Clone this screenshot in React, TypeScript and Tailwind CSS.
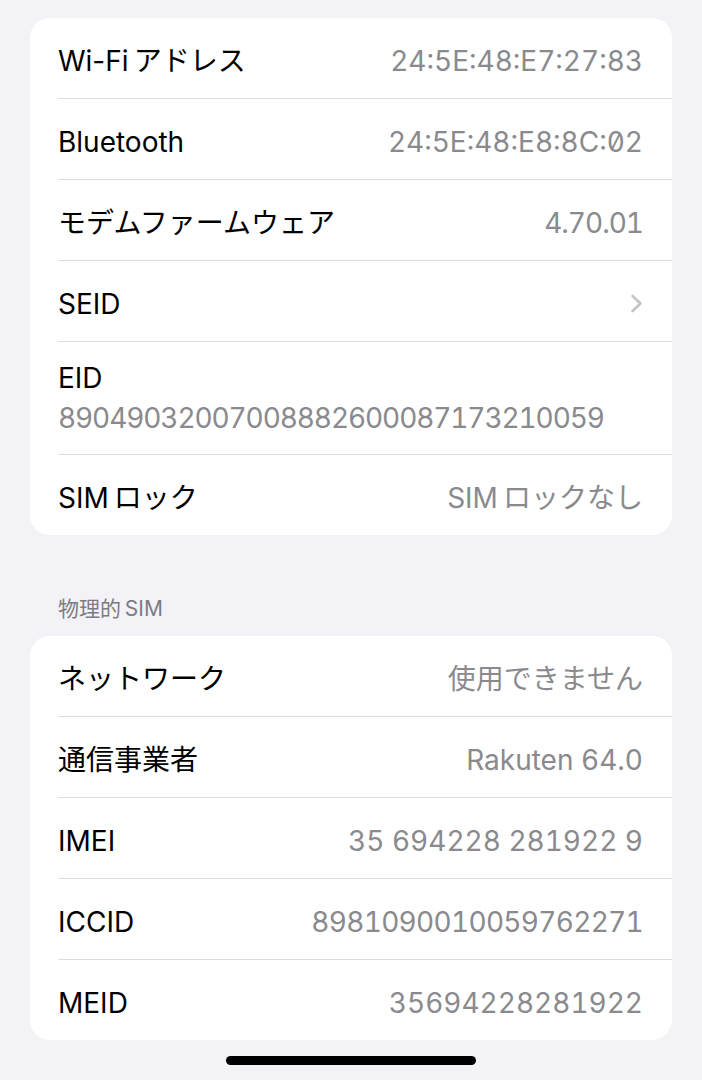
type InfoRow = {
  label: string;
  value?: string;
  chevron?: boolean;
  stacked?: boolean;
  zero?: boolean;
  tight?: string;
};

const deviceRows: InfoRow[] = [
  { label: 'Wi-Fi\u2009アドレス', value: '24:5E:48:E7:27:83', zero: true },
  { label: 'Bluetooth', value: '24:5E:48:E8:8C:02', zero: true },
  { label: 'モデムファームウェア', value: '4.70.01', tight: 'tracking-[-1px]' },
  { label: 'SEID', chevron: true },
  { label: 'EID', value: '89049032007008882600087173210059', stacked: true, tight: 'tracking-[-1.1px]' },
  { label: 'SIM\u2009ロック', value: 'SIM\u2009ロックなし' },
];

const simRows: InfoRow[] = [
  { label: 'ネットワーク', value: '使用できません' },
  { label: '通信事業者', value: 'Rakuten 64.0' },
  { label: 'IMEI', value: '35 694228 281922 9' },
  { label: 'ICCID', value: '8981090010059762271', tight: 'tracking-[-0.7px]' },
  { label: 'MEID', value: '35694228281922' },
];

function Chevron() {
  return (
    <svg width="13" height="19" viewBox="0 0 13 19" fill="none">
      <path d="M2.5 2l8 7.5-8 7.5" stroke="#c4c4c7" strokeWidth="2.6" strokeLinecap="round" strokeLinejoin="round" />
    </svg>
  );
}

function Row({ row, last }: { row: InfoRow; last: boolean }) {
  const border = last ? '' : 'border-b border-[#dedee2]';

  if (row.stacked) {
    return (
      <div className="pl-[28px]">
        <div className={`h-[113px] pt-[16px] pr-[29px] ${border}`}>
          <div className="text-[28px] leading-[40px] text-black">{row.label}</div>
          <div className={`text-[28px] leading-[40px] text-[#8a8a8e] tabular-nums ${row.tight ?? ''}`}>
            {row.value}
          </div>
        </div>
      </div>
    );
  }

  return (
    <div className="pl-[28px]">
      <div
        className={`flex items-center justify-between pt-[5px] pr-[29px] ${last ? 'h-[80px]' : 'h-[81px]'} ${border}`}
      >
        <span className="text-[28px] leading-[34px] text-black">{row.label}</span>
        {row.chevron ? (
          <Chevron />
        ) : (
          <span
            className={`text-[28px] leading-[34px] text-[#8a8a8e] tabular-nums ${row.tight ?? ''} ${
              row.zero ? "[font-feature-settings:'zero','tnum']" : ''
            }`}
          >
            {row.value}
          </span>
        )}
      </div>
    </div>
  );
}

function Card({ rows }: { rows: InfoRow[] }) {
  return (
    <div className="bg-white rounded-[20px] overflow-hidden">
      {rows.map((row, i) => (
        <Row key={row.label} row={row} last={i === rows.length - 1} />
      ))}
    </div>
  );
}

export default function App() {
  return (
    <div
      className="min-h-screen bg-[#f2f2f7] px-[30px] pt-[18px]"
      style={{ fontFamily: "Inter, 'Noto Sans CJK JP', sans-serif" }}
    >
      <Card rows={deviceRows} />

      {/* Section header */}
      <div className="pt-[61px] pb-[14px] pl-[28px] text-[21px] leading-[26px] text-[#7c7c80]">物理的&thinsp;SIM</div>

      <Card rows={simRows} />

      {/* Home indicator */}
      <div className="mt-[16px] mx-auto w-[250px] h-[9px] rounded-full bg-black" />
    </div>
  );
}
